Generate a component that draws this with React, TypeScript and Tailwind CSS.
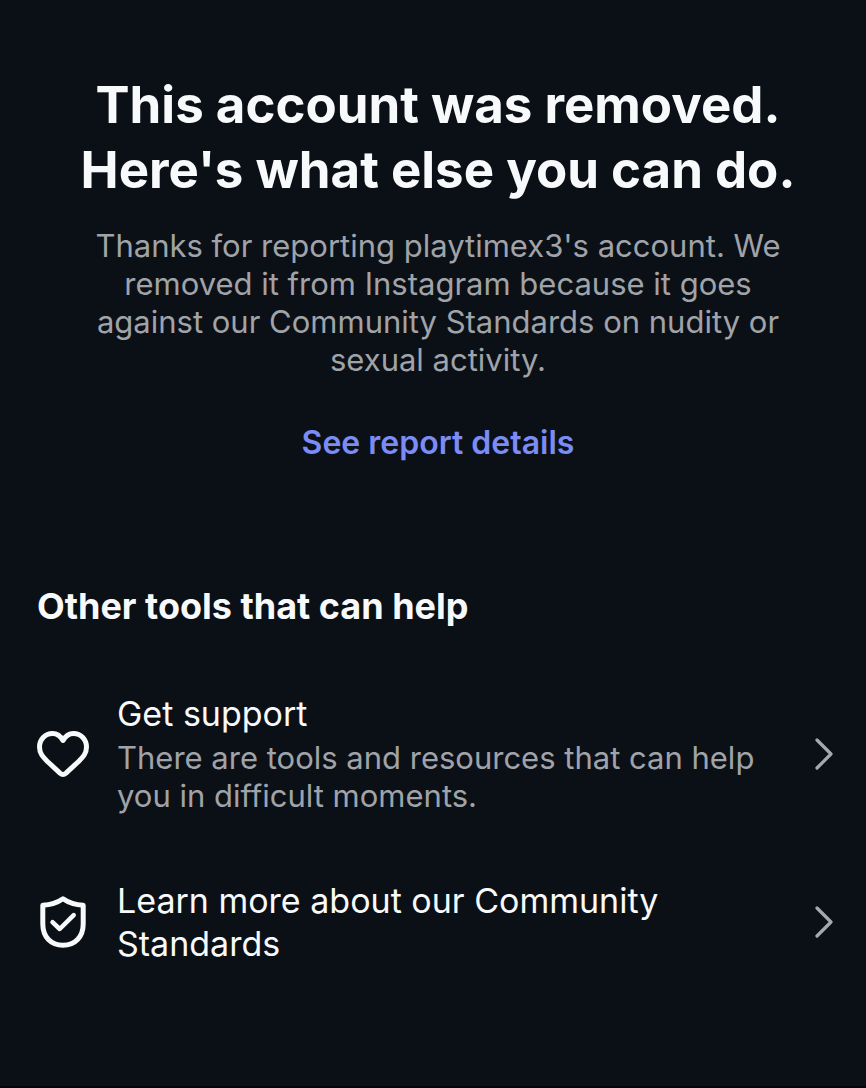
import type { ReactNode } from "react";

type Tool = {
  icon: ReactNode;
  title: string;
  description?: string;
};

function HeartIcon() {
  return (
    <svg viewBox="0 0 52 52" className="size-13" fill="none" aria-hidden="true">
      <path
        d="M26 12.500C23.500 8 20 5.500 15.500 5.500C8 5.500 2.500 11.500 2.500 19C2.500 26 6.500 29.500 11 34L23 45.200Q26 47.800 29 45.200L41 34C45.500 29.500 49.500 26 49.500 19C49.500 11.500 44 5.500 36.500 5.500C32 5.500 28.500 8 26 12.500Z"
        stroke="currentColor"
        strokeWidth="5"
        strokeLinejoin="round"
      />
    </svg>
  );
}

function ShieldIcon() {
  return (
    <svg viewBox="0 0 52 52" className="size-13" fill="none" aria-hidden="true">
      <path
        d="M26 2.800C20 7 13 9 5.800 9.300V28C5.800 41 14 49.200 26 49.200C38 49.200 46.200 41 46.200 28V9.300C39 9 32 7 26 2.800Z"
        stroke="currentColor"
        strokeWidth="5"
        strokeLinejoin="round"
      />
      <path
        d="M15.500 26.200L22.700 33L36.700 19.200"
        stroke="currentColor"
        strokeWidth="4.5"
        strokeLinecap="round"
        strokeLinejoin="round"
      />
    </svg>
  );
}

function Chevron() {
  return (
    <svg viewBox="0 0 32 32" className="size-8 shrink-0 text-[#a5a8ae]" fill="none" aria-hidden="true">
      <path d="M10 2L24 16L10 30" stroke="currentColor" strokeWidth="3.2" strokeLinecap="round" strokeLinejoin="round" />
    </svg>
  );
}

const TOOLS: Tool[] = [
  {
    icon: <HeartIcon />,
    title: "Get support",
    description: "There are tools and resources that can help you in difficult moments.",
  },
  {
    icon: <ShieldIcon />,
    title: "Learn more about our Community Standards",
  },
];

export default function App() {
  return (
    <main className="min-h-screen border-b-2 border-[#04050a] bg-[#0b1017] pt-18 pr-[27px] pb-24 pl-[37px] font-[Inter,sans-serif] text-[#f8f9fa]">
      <header className="text-center">
        <h1 className="text-[51px] leading-[65px] font-bold">
          This account was removed.
          <br />
          Here's what else you can do.
        </h1>
        <p className="mx-auto mt-[25px] max-w-[700px] text-[31px] leading-[38px] text-[#a0a3a8]">
          Thanks for reporting playtimex3's account. We removed it from Instagram because it goes
          against our Community Standards on nudity or sexual activity.
        </p>
        <button type="button" className="mt-11 text-[32px] leading-10 font-semibold text-[#7b8cf5]">
          See report details
        </button>
      </header>

      <section className="mt-[121px]">
        <h2 className="text-[36px] leading-11 font-bold">Other tools that can help</h2>
        <ul className="mt-16 space-y-16">
          {TOOLS.map(({ icon, title, description }) => (
            <li key={title}>
              <button type="button" className="flex w-full items-center gap-7 text-left">
                <span className="shrink-0">{icon}</span>
                <span className="flex-1">
                  <span className="block text-[34px] leading-[43px]">{title}</span>
                  {description && (
                    <span className="mt-1 block text-[31px] leading-[38px] text-[#a0a3a8]">{description}</span>
                  )}
                </span>
                <Chevron />
              </button>
            </li>
          ))}
        </ul>
      </section>
    </main>
  );
}
